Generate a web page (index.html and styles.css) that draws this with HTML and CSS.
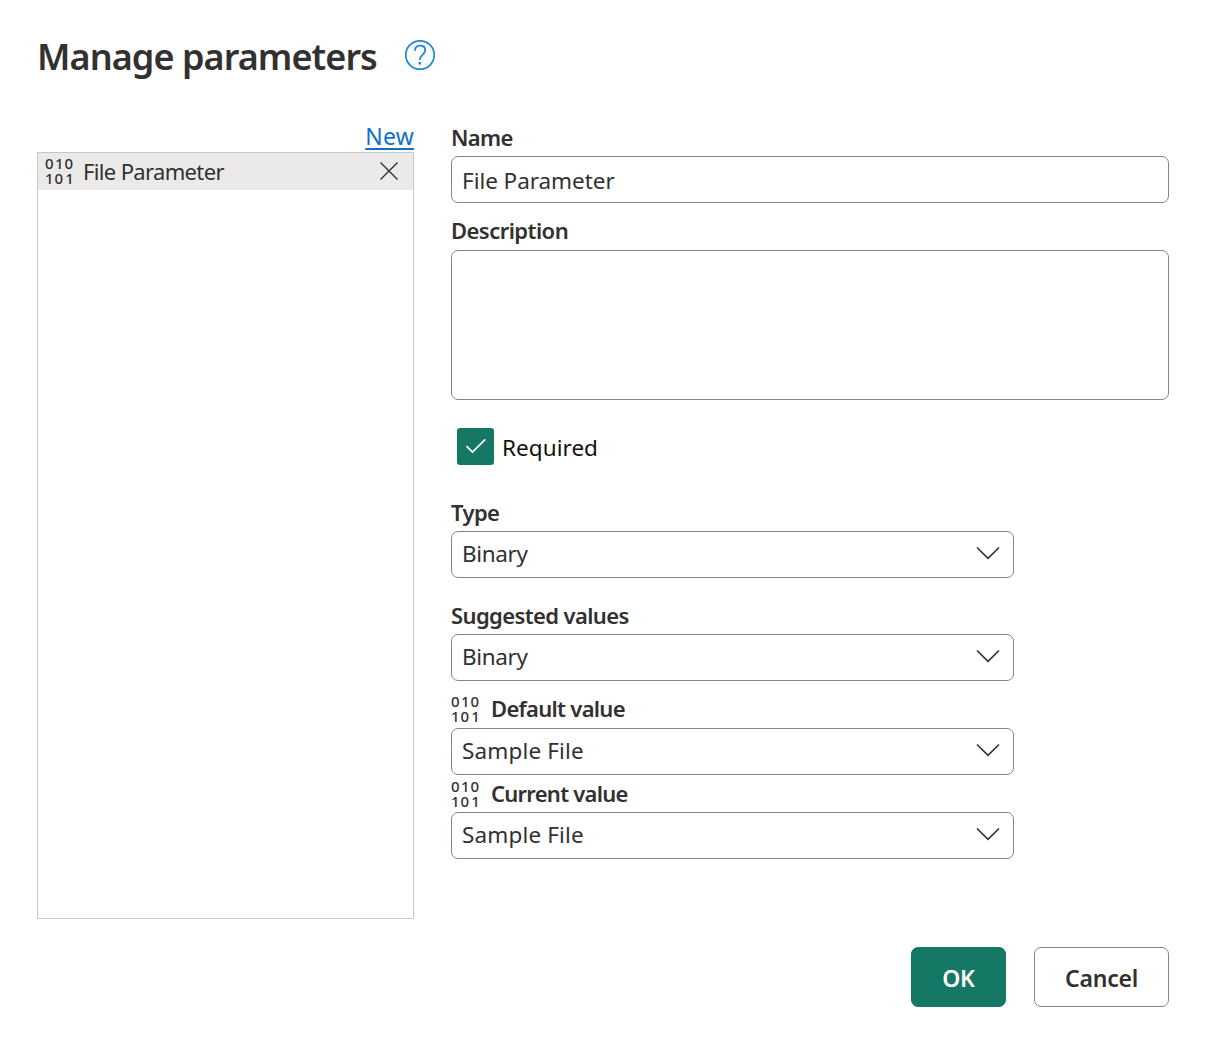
FILE: index.html
```html
<!DOCTYPE html>
<html lang="en">
<head>
<meta charset="utf-8">
<title>Manage parameters</title>
<link rel="stylesheet" href="styles.css">
</head>
<body>
<main class="dialog">
  <header class="header">
    <h1 class="title">Manage parameters</h1>
    <svg class="help" viewBox="0 0 32 32" role="img" aria-label="Help">
      <circle cx="16" cy="16" r="14.2" fill="#fafafa" stroke="#2088d0" stroke-width="1.7"/>
      <path d="M11 11.8 C11 8.4 13 6.7 16 6.7 C19.2 6.7 21.2 8.4 21.2 11.2 C21.2 15.6 15.8 15.8 15.8 21" fill="none" stroke="#2088d0" stroke-width="1.8"/>
      <rect x="14.6" y="23" width="2.5" height="2.5" fill="#2088d0"/>
    </svg>
  </header>
  <div class="body">
    <section class="sidebar">
      <a class="new" href="#">New</a>
      <div class="list">
        <div class="item">
          <svg class="binary" viewBox="0 0 30 30"><text class="digits" y="12" x="0 10 19.6">010</text><text class="digits" y="27" x="0 9.6 20.3">101</text></svg>
          <span class="item-name">File Parameter</span>
          <svg class="close" viewBox="0 0 20 20"><path d="M1.5 1.5 L18.5 18.5 M18.5 1.5 L1.5 18.5" stroke="currentColor" stroke-width="1.4"/></svg>
        </div>
      </div>
    </section>
    <section class="form">
      <div class="label name">Name</div>
      <div class="box wide"><span class="value input">File Parameter</span></div>
      <div class="label description">Description</div>
      <div class="box area"></div>
      <div class="required">
        <span class="checkbox"><svg class="check" viewBox="0 0 22 16"><path d="M1.5 8.2 L7.5 14 L20.3 1.4" fill="none" stroke="#fff" stroke-width="1.7"/></svg></span>
        <span class="required-text">Required</span>
      </div>
      <div class="label type">Type</div>
      <div class="box"><span class="value binary-value">Binary</span><svg class="chevron" viewBox="0 0 24 14"><path d="M1 1.5 L12 12.3 L23 1.5" fill="none" stroke="currentColor" stroke-width="1.6"/></svg></div>
      <div class="label suggested">Suggested values</div>
      <div class="box"><span class="value binary-value">Binary</span><svg class="chevron" viewBox="0 0 24 14"><path d="M1 1.5 L12 12.3 L23 1.5" fill="none" stroke="currentColor" stroke-width="1.6"/></svg></div>
      <div class="label default"><svg class="binary" viewBox="0 0 30 30"><text class="digits" y="12" x="0 10 19.6">010</text><text class="digits" y="27" x="0 9.6 20.3">101</text></svg><span>Default value</span></div>
      <div class="box"><span class="value sample">Sample File</span><svg class="chevron" viewBox="0 0 24 14"><path d="M1 1.5 L12 12.3 L23 1.5" fill="none" stroke="currentColor" stroke-width="1.6"/></svg></div>
      <div class="label current"><svg class="binary" viewBox="0 0 30 30"><text class="digits" y="12" x="0 10 19.6">010</text><text class="digits" y="27" x="0 9.6 20.3">101</text></svg><span>Current value</span></div>
      <div class="box"><span class="value sample">Sample File</span><svg class="chevron" viewBox="0 0 24 14"><path d="M1 1.5 L12 12.3 L23 1.5" fill="none" stroke="currentColor" stroke-width="1.6"/></svg></div>
    </section>
  </div>
  <footer class="footer">
    <button class="button primary">OK</button>
    <button class="button">Cancel</button>
  </footer>
</main>
</body>
</html>
```
FILE: styles.css
```css
* { box-sizing: border-box; }
body {
  margin: 0;
  background: #fff;
  color: #323130;
  font-family: "Noto Sans", "Open Sans", sans-serif;
}
.dialog { width: 1208px; height: 1047px; padding: 31px 39px 0 37px; }
.header { display: flex; height: 91px; align-items: flex-start; }
.title { margin: 0; width: 367px; font-size: 36px; line-height: 52px; font-weight: 600; letter-spacing: -0.93px; white-space: nowrap; }
.help { width: 32px; height: 32px; margin-top: 8px; }
.body { display: flex; gap: 37px; height: 797px; }
.sidebar { display: flex; flex-direction: column; width: 377px; }
.new { align-self: flex-end; height: 30px; font-size: 23px; line-height: 29px; letter-spacing: 0.2px; color: #1072c4; text-decoration-thickness: 2px; text-underline-offset: 3px; }
.list { height: 767px; border: 1px solid #c8c8c8; }
.item { display: flex; height: 37px; padding: 0 14px 2px 7px; align-items: center; background: #ebeae9; }
.binary { flex: none; width: 30px; height: 30px; overflow: visible; }
.digits { font-size: 15px; font-weight: 500; letter-spacing: 0; fill: #323130; }
.item .binary { margin-top: 2px; }
.item-name { flex: 1; margin-left: 8px; font-size: 22px; line-height: 34px; letter-spacing: -0.65px; }
.close { width: 20px; height: 20px; }
.form { width: 718px; }
.label { display: flex; height: 34px; font-size: 22px; line-height: 31px; font-weight: 600; letter-spacing: -0.62px; white-space: nowrap; }
.label .binary { margin-right: 10px; }
.description { line-height: 29px; margin-top: 13px; letter-spacing: -0.55px; }
.type { margin-top: 32px; }
.suggested { margin-top: 22px; }
.default { margin-top: 13px; line-height: 29px; letter-spacing: -0.7px; }
.current { margin-top: 3px; letter-spacing: -0.75px; }
.default .binary { margin-top: 1px; }
.current .binary { margin-top: 2px; }
.box { display: flex; align-items: center; justify-content: space-between; width: 563px; height: 47px; padding: 0 13px 3px 10px; border: 1px solid #868584; border-radius: 7px; }
.wide { width: 718px; }
.area { width: 718px; height: 150px; }
.value { padding-top: 2px; font-size: 22.5px; line-height: 42px; }
.input { padding-top: 5px; letter-spacing: -0.05px; }
.binary-value { letter-spacing: -0.35px; }
.sample { letter-spacing: 0.15px; }
.chevron { width: 24px; height: 14px; }
.required { display: flex; height: 37px; margin: 28px 0 0 6px; align-items: center; color: #111; }
.checkbox { display: flex; align-items: center; justify-content: center; width: 37px; height: 37px; padding-bottom: 1px; border-radius: 3px; background: #147865; }
.check { width: 22px; height: 16px; }
.required-text { margin-left: 8px; padding-top: 2px; font-size: 22.5px; line-height: 37px; letter-spacing: 0.05px; }
.footer { display: flex; justify-content: flex-end; gap: 28px; margin-top: 28px; }
.button { width: 135px; height: 60px; padding: 2px 0 0; border: 1px solid #868584; border-radius: 7px; background: #fff; color: #323130; font: 600 23px/56px "Noto Sans", "Open Sans", sans-serif; letter-spacing: -0.2px; }
.primary { width: 95px; border-color: #147865; background: #147865; color: #fff; }
```
